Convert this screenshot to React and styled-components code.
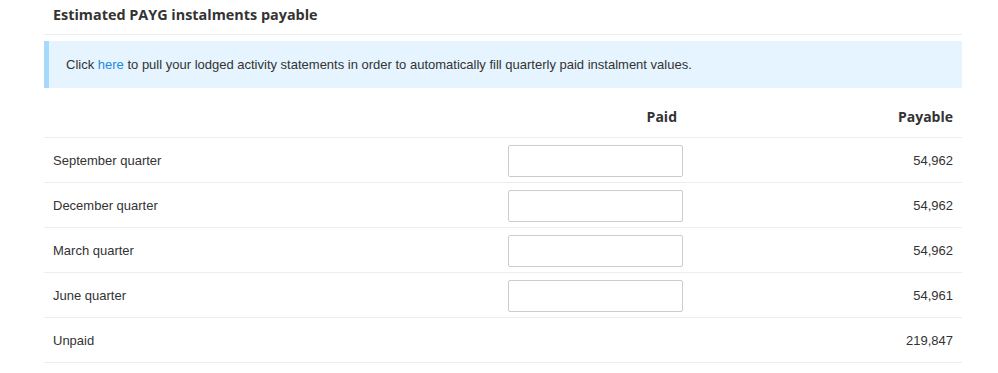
import React from 'react';
import styled, { createGlobalStyle } from 'styled-components';

const GlobalStyle = createGlobalStyle`
  body {
    margin: 0;
    background: #fff;
    font-family: Arial, "Liberation Sans", sans-serif;
    color: #333;
  }
`;

const Panel = styled.div`
  width: 918px;
  margin-left: 44px;
`;

const Title = styled.h3`
  margin: 0;
  padding: 5px 9px 0;
  height: 35px;
  box-sizing: border-box;
  font-family: 'Open Sans', sans-serif;
  font-weight: 700;
  font-size: 14.4px;
  color: #333;
  border-bottom: 1px solid #eee;
`;

const Notice = styled.div`
  margin-top: 6px;
  height: 47px;
  box-sizing: border-box;
  display: flex;
  align-items: center;
  padding-left: 17px;
  background: #e5f4fe;
  border-left: 5px solid #a8d8fb;
  font-size: 13px;
  color: #333;

  a {
    color: #1e88e5;
    text-decoration: none;
  }
`;

const Table = styled.div`
  margin-top: 4px;
  display: grid;
  grid-template-columns: 1fr 175px 279px;
`;

const Row = styled.div`
  display: contents;
`;

const Cell = styled.div`
  height: ${(p) => (p.$head ? '46px' : '45px')};
  box-sizing: border-box;
  display: flex;
  align-items: center;
  justify-content: ${(p) => (p.$right ? 'flex-end' : 'flex-start')};
  padding: ${(p) => (p.$last ? '0 9px 0 0' : p.$right ? '0' : '0 9px')};
  border-bottom: 1px solid #eee;
  font-size: 13px;
  color: #333;
`;

const HeadCell = styled(Cell)`
  font-family: 'Open Sans', sans-serif;
  font-weight: 700;
  font-size: 14px;
  padding-top: 4px;
  padding-right: ${(p) => (p.$last ? '9px' : '6px')};
`;

const Input = styled.input`
  width: 175px;
  height: 32px;
  box-sizing: border-box;
  border: 1px solid #ccc;
  border-radius: 2px;
  background: #fff;
  margin-top: 1px;
`;

const rows = [
  { label: 'September quarter', value: '54,962', input: true },
  { label: 'December quarter', value: '54,962', input: true },
  { label: 'March quarter', value: '54,962', input: true },
  { label: 'June quarter', value: '54,961', input: true },
  { label: 'Unpaid', value: '219,847', input: false },
];

export default function App() {
  return (
    <>
      <GlobalStyle />
      <Panel>
        <Title>Estimated PAYG instalments payable</Title>
        <Notice>
          <span>
            Click <a href="#">here</a> to pull your lodged activity statements in order to automatically fill quarterly paid instalment values.
          </span>
        </Notice>
        <Table>
          <Row>
            <HeadCell $head />
            <HeadCell $head $right>Paid</HeadCell>
            <HeadCell $head $right $last>Payable</HeadCell>
          </Row>
          {rows.map((r) => (
            <Row key={r.label}>
              <Cell>{r.label}</Cell>
              <Cell $right>{r.input && <Input type="text" />}</Cell>
              <Cell $right $last>{r.value}</Cell>
            </Row>
          ))}
        </Table>
      </Panel>
    </>
  );
}
